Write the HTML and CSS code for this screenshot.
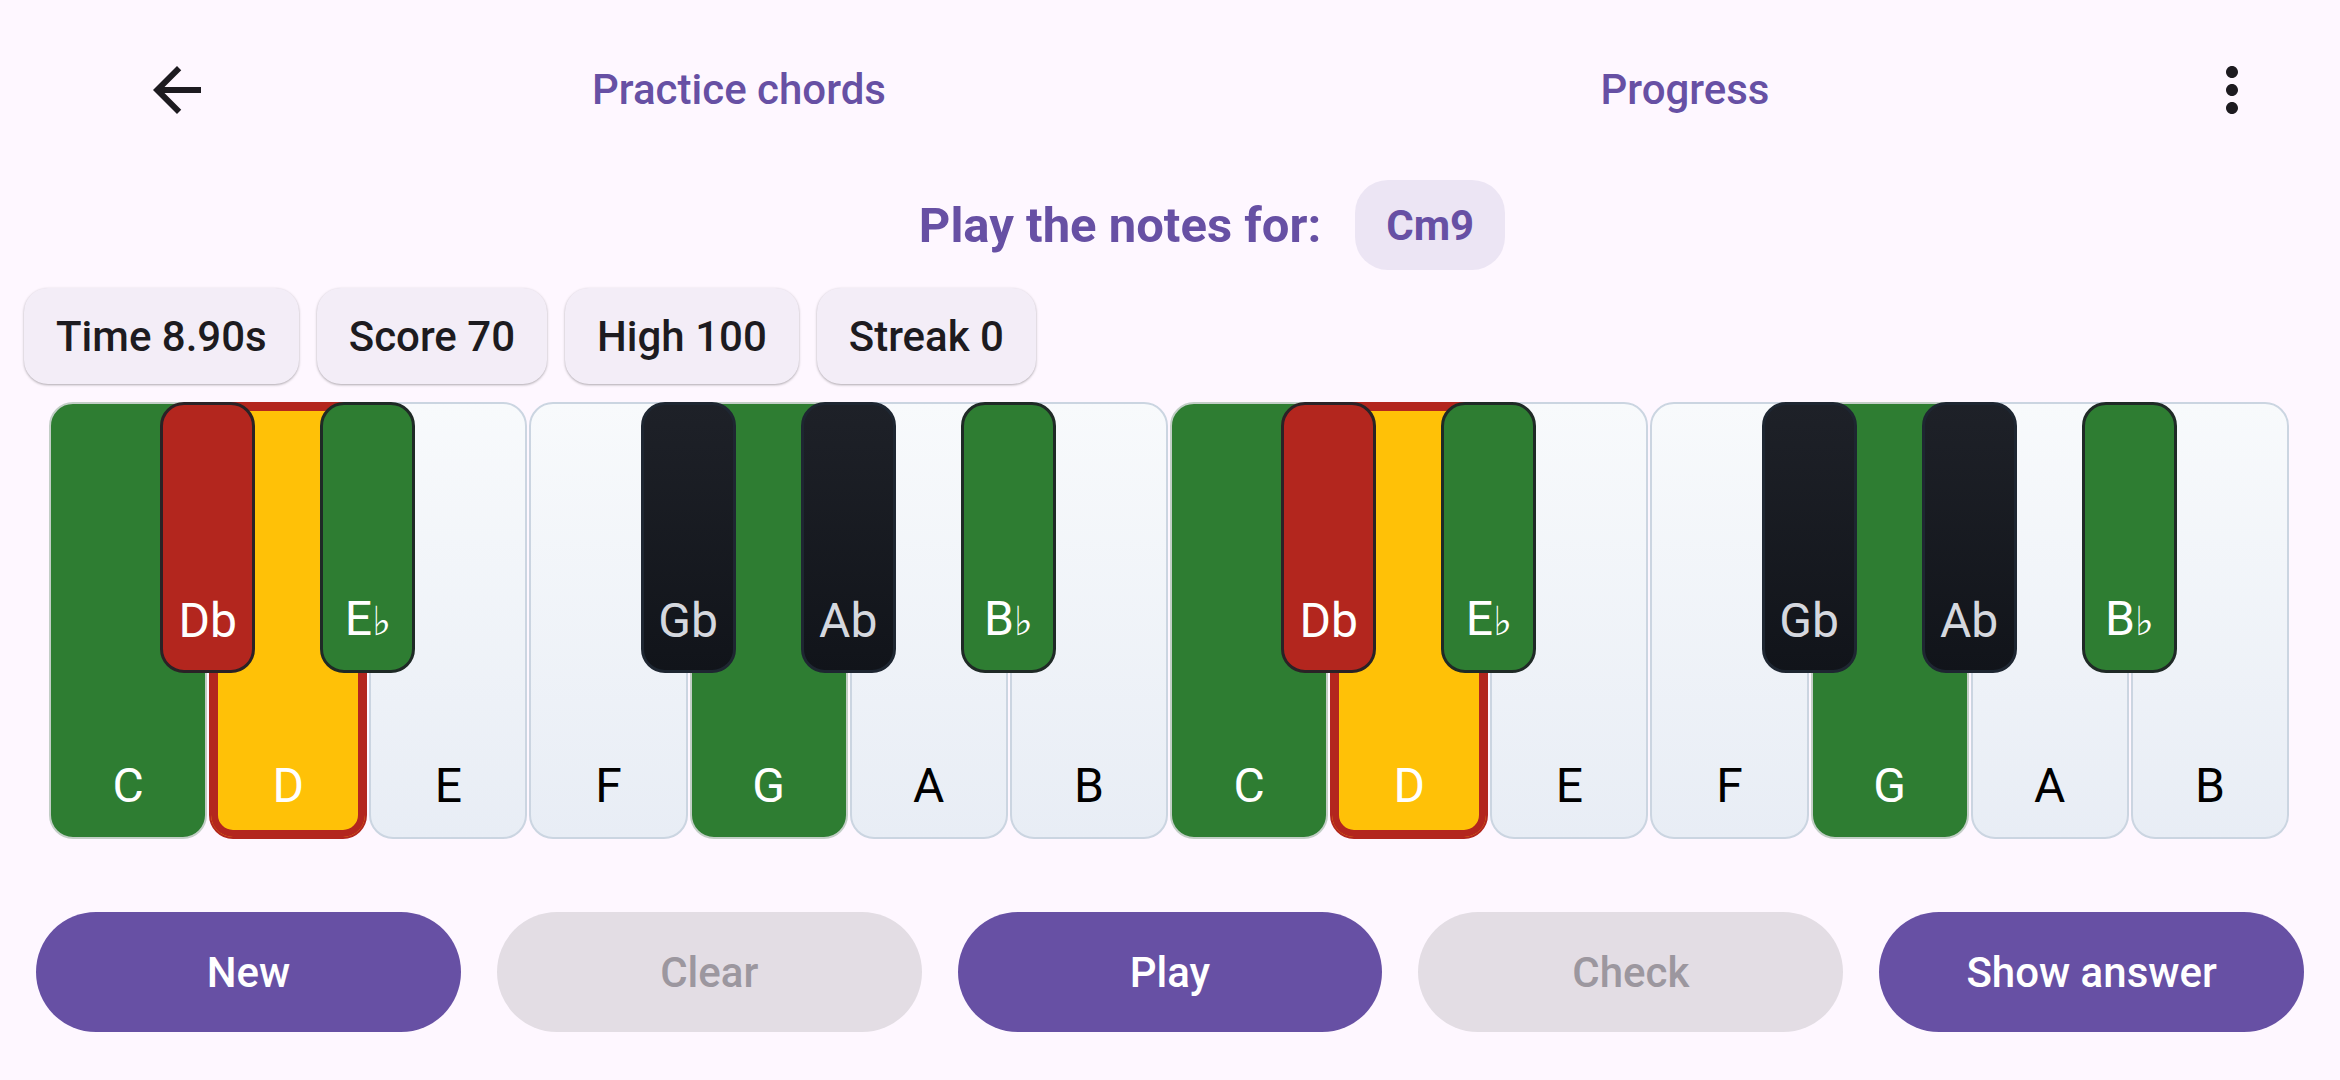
FILE: index.html
```html
<!DOCTYPE html>
<html lang="en">
<head>
<meta charset="utf-8">
<title>Practice chords</title>
<link rel="stylesheet" href="styles.css">
</head>
<body>
<header class="topbar">
  <div class="nav-left">
    <svg class="icon" viewBox="0 0 24 24" width="72" height="72" aria-label="Back"><path d="M20 11H7.83l5.59-5.59L12 4l-8 8 8 8 1.41-1.41L7.83 13H20v-2z"/></svg>
  </div>
  <nav class="tabs">
    <div class="tab">Practice chords</div>
    <div class="tab">Progress</div>
  </nav>
  <div class="nav-right">
    <svg class="icon" viewBox="0 0 24 24" width="72" height="72" aria-label="More"><path d="M12 8c1.1 0 2-.9 2-2s-.9-2-2-2-2 .9-2 2 .9 2 2 2zm0 2c-1.1 0-2 .9-2 2s.9 2 2 2 2-.9 2-2-.9-2-2-2zm0 6c-1.1 0-2 .9-2 2s.9 2 2 2 2-.9 2-2-.9-2-2-2z"/></svg>
  </div>
</header>

<main class="practice">
  <div class="prompt">
    <span class="prompt-text">Play the notes for:</span>
    <span class="chord-chip">Cm9</span>
  </div>

  <div class="stats">
    <div class="stat">Time 8.90s</div>
    <div class="stat">Score 70</div>
    <div class="stat">High 100</div>
    <div class="stat">Streak 0</div>
  </div>

  <div class="keyboard">
    <div class="white green"><span class="label">C</span>
      <div class="black red"><span class="label">Db</span></div>
    </div>
    <div class="white yellow"><span class="label">D</span>
      <div class="black green"><span class="label">E<span class="flat">♭</span></span></div>
    </div>
    <div class="white"><span class="label">E</span></div>
    <div class="white"><span class="label">F</span>
      <div class="black"><span class="label">Gb</span></div>
    </div>
    <div class="white green"><span class="label">G</span>
      <div class="black"><span class="label">Ab</span></div>
    </div>
    <div class="white"><span class="label">A</span>
      <div class="black green"><span class="label">B<span class="flat">♭</span></span></div>
    </div>
    <div class="white"><span class="label">B</span></div>

    <div class="white green"><span class="label">C</span>
      <div class="black red"><span class="label">Db</span></div>
    </div>
    <div class="white yellow"><span class="label">D</span>
      <div class="black green"><span class="label">E<span class="flat">♭</span></span></div>
    </div>
    <div class="white"><span class="label">E</span></div>
    <div class="white"><span class="label">F</span>
      <div class="black"><span class="label">Gb</span></div>
    </div>
    <div class="white green"><span class="label">G</span>
      <div class="black"><span class="label">Ab</span></div>
    </div>
    <div class="white"><span class="label">A</span>
      <div class="black green"><span class="label">B<span class="flat">♭</span></span></div>
    </div>
    <div class="white"><span class="label">B</span></div>
  </div>

  <div class="actions">
    <button class="btn">New</button>
    <button class="btn disabled">Clear</button>
    <button class="btn">Play</button>
    <button class="btn disabled">Check</button>
    <button class="btn">Show answer</button>
  </div>
</main>
</body>
</html>
```

FILE: styles.css
```css
html, body {
  margin: 0;
  padding: 0;
}

body {
  width: 2340px;
  height: 1080px;
  overflow: hidden;
  background: #FEF7FF;
  font-family: Roboto, "Noto Sans", "DejaVu Sans", sans-serif;
  color: #1D1B20;
}

/* ---------- top bar ---------- */
.topbar {
  display: flex;
  align-items: center;
  height: 180px;
}

.nav-left {
  width: 266px;
  padding-left: 141px;
  box-sizing: border-box;
  display: flex;
  align-items: center;
}

.nav-right {
  width: 182px;
  padding-left: 38px;
  box-sizing: border-box;
  display: flex;
  align-items: center;
}

.icon {
  display: block;
  fill: #1D1B20;
}

.tabs {
  flex: 1;
  display: flex;
}

.tab {
  flex: 1;
  text-align: center;
  font-size: 42px;
  font-weight: 500;
  color: #6750A4;
  line-height: 56px;
}

/* ---------- prompt ---------- */
.practice {
  display: flex;
  flex-direction: column;
}

.prompt {
  display: flex;
  justify-content: center;
  align-items: center;
  gap: 34px;
  height: 90px;
  padding-left: 84px;
}

.prompt-text {
  font-size: 49px;
  font-weight: 700;
  color: #6750A4;
}

.chord-chip {
  display: flex;
  align-items: center;
  justify-content: center;
  height: 90px;
  padding: 0 31px;
  box-sizing: border-box;
  border-radius: 33px;
  background: #ECE5F4;
  color: #6750A4;
  font-size: 42px;
  font-weight: 700;
}

/* ---------- stats ---------- */
.stats {
  display: flex;
  gap: 18px;
  padding-left: 24px;
  margin-top: 18px;
}

.stat {
  height: 96px;
  display: flex;
  align-items: center;
  padding: 0 32px;
  border-radius: 24px;
  background: #F3EDF7;
  box-shadow: 0 1px 3px rgba(0, 0, 0, 0.22), 0 1px 2px rgba(0, 0, 0, 0.12);
  font-size: 42px;
  font-weight: 500;
  color: #1D1B20;
}

/* ---------- keyboard ---------- */
.keyboard {
  display: flex;
  gap: 2px;
  width: 2240px;
  height: 437px;
  margin-top: 18px;
  margin-left: 49px;
}

.white {
  position: relative;
  flex: 1;
  box-sizing: border-box;
  border: 2px solid #CBD5E1;
  border-radius: 24px;
  background: linear-gradient(180deg, #F8FAFC 0%, #E8EDF5 100%);
  display: flex;
  flex-direction: column;
  justify-content: flex-end;
  align-items: center;
  padding-bottom: 27px;
}

.label {
  font-size: 48px;
  line-height: 48px;
  font-weight: 400;
  color: #000;
  white-space: nowrap;
}

.flat {
  font-family: "DejaVu Sans", sans-serif;
  font-size: 40px;
  font-style: italic;
}

.white.green {
  background: #2E7D32;
  border-color: #C2CEC6;
}

.white.green > .label,
.white.yellow > .label {
  color: #FFFFFF;
}

.white.yellow {
  background: #FFC107;
  border-color: #B3261E;
  box-shadow: inset 0 0 0 7px #B3261E;
}

.black {
  position: absolute;
  top: -2px;
  right: -50px;
  z-index: 2;
  width: 95px;
  height: 271px;
  box-sizing: border-box;
  border: 3px solid #1E2631;
  border-radius: 24px;
  background: linear-gradient(180deg, #1E2128 0%, #11141A 100%);
  display: flex;
  flex-direction: column;
  justify-content: flex-end;
  align-items: center;
  padding-bottom: 25px;
}

.black > .label {
  color: #D5D8DF;
}

.black.green {
  background: #2E7D32;
  border-color: #1F2A26;
}

.black.red {
  background: #B3261E;
  border-color: #2A2226;
}

.black.green > .label,
.black.red > .label {
  color: #FFFFFF;
}

/* ---------- actions ---------- */
.actions {
  display: flex;
  gap: 36px;
  padding: 0 36px;
  margin-top: 73px;
}

.btn {
  flex: 1;
  height: 120px;
  border: none;
  border-radius: 60px;
  background: #6750A4;
  color: #FFFFFF;
  font-family: Roboto, "Noto Sans", sans-serif;
  font-size: 42px;
  font-weight: 500;
  padding: 0;
}

.btn.disabled {
  background: #E3DDE4;
  color: #9C979F;
}
```
